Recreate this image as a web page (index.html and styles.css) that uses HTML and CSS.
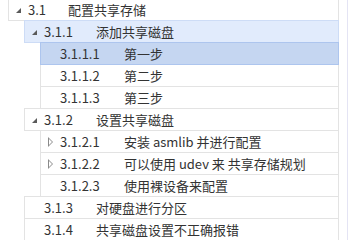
FILE: index.html
```html
<!DOCTYPE html>
<html lang="zh-CN">
<head>
    <meta charset="UTF-8">
    <title>目录</title>
    <link rel="stylesheet" href="styles.css">
</head>
<body>
    <div class="tocPanel">
        <div class="tocList">
            <div class="tocRow lvl1">
                <span class="arrow open"></span>
                <span class="num">3.1</span>
                <span class="title">配置共享存储</span>
            </div>
            <div class="tocRow lvl2 hover">
                <span class="arrow open"></span>
                <span class="num">3.1.1</span>
                <span class="title">添加共享磁盘</span>
            </div>
            <div class="tocRow lvl3 selected">
                <span class="arrow"></span>
                <span class="num">3.1.1.1</span>
                <span class="title">第一步</span>
            </div>
            <div class="tocRow lvl3">
                <span class="arrow"></span>
                <span class="num">3.1.1.2</span>
                <span class="title">第二步</span>
            </div>
            <div class="tocRow lvl3">
                <span class="arrow"></span>
                <span class="num">3.1.1.3</span>
                <span class="title">第三步</span>
            </div>
            <div class="tocRow lvl2">
                <span class="arrow open"></span>
                <span class="num">3.1.2</span>
                <span class="title">设置共享磁盘</span>
            </div>
            <div class="tocRow lvl3">
                <span class="arrow closed"></span>
                <span class="num">3.1.2.1</span>
                <span class="title">安装 asmlib 并进行配置</span>
            </div>
            <div class="tocRow lvl3">
                <span class="arrow closed"></span>
                <span class="num">3.1.2.2</span>
                <span class="title">可以使用 udev 来 共享存储规划</span>
            </div>
            <div class="tocRow lvl3">
                <span class="arrow"></span>
                <span class="num">3.1.2.3</span>
                <span class="title">使用裸设备来配置</span>
            </div>
            <div class="tocRow lvl2">
                <span class="arrow"></span>
                <span class="num">3.1.3</span>
                <span class="title">对硬盘进行分区</span>
            </div>
            <div class="tocRow lvl2">
                <span class="arrow"></span>
                <span class="num">3.1.4</span>
                <span class="title">共享磁盘设置不正确报错</span>
            </div>
        </div>
    </div>
</body>
</html>
```

FILE: styles.css
```css
* {
    margin: 0;
    padding: 0;
    box-sizing: border-box;
}

body {
    font-family: "Noto Sans CJK SC", "Noto Sans", sans-serif;
    font-size: 13px;
    color: #333333;
    background: #ffffff;
    overflow: hidden;
}

.tocPanel {
    width: 348px;
    height: 240px;
    border-right: 1px solid #e4e4f4;
    overflow: hidden;
}

.tocList {
    width: 339px;
    margin-top: -2px;
}

.tocRow {
    display: flex;
    align-items: center;
    height: 23px;
    margin-top: -1px;
    border: 1px solid #e3e3e3;
    background: #ffffff;
    position: relative;
    white-space: nowrap;
}

.lvl1 { margin-left: 8px; }
.lvl2 { margin-left: 24px; }
.lvl3 { margin-left: 40px; }

.arrow {
    width: 19px;
    height: 8px;
    flex-shrink: 0;
    position: relative;
}

.arrow.open::before {
    content: "";
    position: absolute;
    left: 7px;
    top: 2px;
    width: 0;
    height: 0;
    border-left: 5px solid transparent;
    border-bottom: 5px solid #5a5a5a;
}

.arrow.closed::before {
    content: "";
    position: absolute;
    left: 7px;
    top: -1px;
    width: 0;
    height: 0;
    border-top: 5px solid transparent;
    border-bottom: 5px solid transparent;
    border-left: 5px solid #8a8a8a;
}

.arrow.closed::after {
    content: "";
    position: absolute;
    left: 8px;
    top: 1px;
    width: 0;
    height: 0;
    border-top: 3px solid transparent;
    border-bottom: 3px solid transparent;
    border-left: 3px solid #ffffff;
}

.lvl1 .num { width: 40px; }
.lvl2 .num { width: 52px; }
.lvl3 .num { width: 64px; }

.num, .title {
    line-height: 20px;
}

.hover {
    background: #e1ebfc;
    border-color: #cddcf6;
    z-index: 1;
}

.selected {
    background: #c5d6f1;
    border-color: #adc5ee;
    z-index: 2;
}
```
